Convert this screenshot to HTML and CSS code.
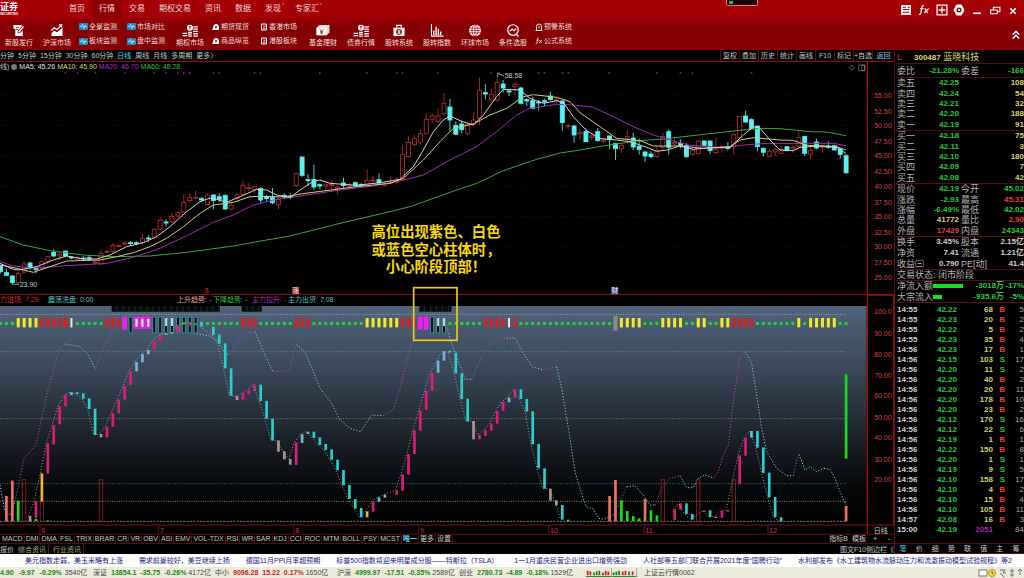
FILE: index.html
```html
<!DOCTYPE html>
<html lang="zh-CN">
<head>
<meta charset="utf-8">
<title>证券行情</title>
<link rel="stylesheet" href="styles.css">
</head>
<body>
<svg class="defs" aria-hidden="true">
  <symbol id="i-new" viewBox="0 0 14 14"><path d="M1 1h9v2l-4 4v3l3-1 2-2v6H3V5H1z" fill="#fff"/><path d="M6 8l5-6 2 1-5 6-2 1z" fill="#fff" stroke="#8a0003" stroke-width=".7"/><path d="M4 4h3M4 6h2" stroke="#8a0003"/></symbol>
  <symbol id="i-trend" viewBox="0 0 14 14"><path d="M1 13v-3l3-3 3 2 6-5v9z" fill="#fff"/><path d="M1 7l3-3 3 2 5-5M9 1h3v3" fill="none" stroke="#fff" stroke-width="1.3"/></symbol>
  <symbol id="i-coins" viewBox="0 0 18 14"><circle cx="9" cy="4" r="3.2" fill="#fff"/><path d="M9 2v4M7.7 3h2.6" stroke="#8a0003" stroke-width=".8"/><path d="M1 10h5M1 12.500h5M7 9h4M7 11h4M7 13h4M12.500 3h5M12.500 5.500h5M12.500 8h5M12.500 10.500h5M12.500 13h5" stroke="#fff" stroke-width="1.400"/></symbol>
  <symbol id="i-fund" viewBox="0 0 16 14"><path d="M1 4l3-3h11v8l-3 3H1z" fill="#e9d5d5"/><path d="M1 4h11v8H1z" fill="#fff"/><path d="M4.500 5.500l2 2.500 2-2.500M6.500 8v3M5 8.300h3M5 9.600h3" stroke="#8a0003" stroke-width=".8" fill="none"/></symbol>
  <symbol id="i-bag" viewBox="0 0 14 14"><path d="M1 4h12v9H1z" fill="#fff"/><path d="M4.500 4V1.500h5V4" fill="none" stroke="#fff" stroke-width="1.300"/><circle cx="7" cy="8.500" r="3" fill="#8a0003"/><path d="M8.500 7.200H6.200v1.300h1.700v1.400H5.500M7 6.200v4.600" stroke="#fff" stroke-width=".8" fill="none"/></symbol>
  <symbol id="i-bars" viewBox="0 0 14 14"><path d="M1 0v13h13" fill="none" stroke="#fff" stroke-width="1.200"/><path d="M3.500 12V7M6 12V3M8.500 12V5M11 12V8" stroke="#fff" stroke-width="1.500"/></symbol>
  <symbol id="i-globe" viewBox="0 0 14 14"><circle cx="7" cy="7" r="6.500" fill="#fff"/><path d="M0 4.500h14M0 9.500h14M7 0v14M1 7h12" stroke="#8a0003" stroke-width=".7"/><ellipse cx="7" cy="7" rx="3.200" ry="6.500" fill="none" stroke="#8a0003" stroke-width=".7"/></symbol>
  <symbol id="i-pick" viewBox="0 0 14 14"><circle cx="7" cy="6.500" r="5.700" fill="none" stroke="#fff" stroke-width="1.300"/><path d="M3.500 8l2.500-2.500 2 1.700L10.500 5M10.500 11l2.500 2.500" fill="none" stroke="#fff" stroke-width="1.300"/></symbol>
  <symbol id="i-wave" viewBox="0 0 9 7"><rect width="9" height="7" rx="1" fill="#2787bf"/><path d="M1 3.500h1.500l1-2 1.300 4 1.300-3 .8 1.500H8" fill="none" stroke="#d8f2ff" stroke-width=".8"/></symbol>
  <symbol id="i-lamp" viewBox="0 0 8 8"><path d="M1 5c0-5 5.500-5 6-1v3H0z" fill="#fff"/><circle cx="4" cy="4" r="1" fill="#8a0003"/></symbol>
  <symbol id="i-box" viewBox="0 0 8 8"><path d="M1.500 1h5v6h-5z" fill="none" stroke="#fff"/><path d="M3 3h2.500L3 5.500h2.500" fill="none" stroke="#fff" stroke-width=".7"/></symbol>
  <symbol id="i-bell" viewBox="0 0 8 8"><path d="M1.500 7V3.500a2.500 2.500 0 0 1 5 0V7M.5 7.500h7M4 3v2.500" fill="none" stroke="#fff" stroke-width=".9"/></symbol>
  <symbol id="i-fx" viewBox="0 0 12 10"><path d="M6 .8C4.500.3 4 1 3.700 3L3 7.500C2.700 9.300 2 9.500 1 9.200M2 3.700h3.500M6.500 4c2-.8 1.500 4 3.500 3.500M10.800 3.800C9 3.500 8 7.500 6 7.500" fill="none" stroke="#fff" stroke-width="1.200"/></symbol>
</svg>

<header class="topbar">
  <div class="brand"><strong>证券</strong><small>SECURITIES</small></div>
  <nav class="menu">
    <a href="#">首页</a><a href="#" class="is-active">行情</a><a href="#">交易</a><a href="#">期权交易</a><a href="#">资讯</a><a href="#">数据</a><a href="#" class="has-new">发现</a><a href="#" class="has-new">专家汇</a>
  </nav>
  <div class="meter"><i></i></div>
  <div class="window-tools">
    <button aria-label="资讯"><svg viewBox="0 0 11 11"><path d="M1 1h9v9H1z" fill="#fff"/><path d="M2.500 3h3M2.500 5h6M2.500 7.500h6M7 3h2" stroke="#a50006"/></svg></button>
    <button aria-label="公式"><svg viewBox="0 0 12 10"><use href="#i-fx"/></svg></button>
    <button aria-label="布局"><svg viewBox="0 0 11 11"><path d="M1 1h9v9H1zM5.500 2.500v6M2.500 5.500h6" fill="none" stroke="#fff" stroke-width="1.200"/></svg></button>
    <button aria-label="设置"><svg viewBox="0 0 11 11"><path d="M3.500 1h4l2.500 4.500L7.500 10h-4L1 5.500z" fill="#fff" stroke="#fff" stroke-linejoin="round"/><circle cx="5.500" cy="5.500" r="2.300" fill="#a50006"/><circle cx="5.500" cy="5.500" r="1" fill="#fff"/></svg></button>
    <button aria-label="最小化"><svg viewBox="0 0 11 11"><path d="M2 8.500h7" stroke="#fff" stroke-width="1.500"/></svg></button>
    <button aria-label="还原"><svg viewBox="0 0 11 11"><path d="M4 5V3h6v4H8M1.500 5.500H7.500v3.500h-6z" fill="none" stroke="#fff"/></svg></button>
    <button aria-label="关闭"><svg viewBox="0 0 11 11"><path d="M3 4l5 5M8 4l-5 5" stroke="#fff" stroke-width="1.400"/></svg></button>
  </div>
</header>

<div class="toolbar">
  <button class="tool"><svg><use href="#i-new"/></svg>新股发行</button>
  <button class="tool"><svg><use href="#i-trend"/></svg>沪深市场</button>
  <div class="minis">
    <button><svg class="blue"><use href="#i-wave"/></svg>全景监测</button><button><svg class="blue"><use href="#i-wave"/></svg>市场对比</button>
    <button><svg class="blue"><use href="#i-wave"/></svg>板块监测</button><button><svg class="blue"><use href="#i-wave"/></svg>盘中监测</button>
  </div>
  <button class="tool"><svg><use href="#i-coins"/></svg>期权市场</button>
  <div class="minis">
    <button><svg><use href="#i-lamp"/></svg>期货现货</button><button><svg><use href="#i-box"/></svg>香港市场</button>
    <button><svg><use href="#i-lamp"/></svg>商品纵览</button><button><svg><use href="#i-box"/></svg>港股板块</button>
  </div>
  <button class="tool"><svg><use href="#i-fund"/></svg>基金理财</button>
  <button class="tool"><svg><use href="#i-coins"/></svg>债券行情</button>
  <button class="tool"><svg><use href="#i-bag"/></svg>股转系统</button>
  <button class="tool"><svg><use href="#i-bars"/></svg>股转指数</button>
  <button class="tool"><svg><use href="#i-globe"/></svg>环球市场</button>
  <button class="tool"><svg><use href="#i-pick"/></svg>条件选股</button>
  <div class="minis single">
    <button><svg><use href="#i-bell"/></svg>预警系统</button>
    <button><svg><use href="#i-fx"/></svg>公式系统</button>
  </div>
  <button class="collapse" aria-label="收起"><svg viewBox="0 0 10 12"><path d="M1 6l4-4 4 4M1 11l4-4 4 4" fill="none" stroke="#fff" stroke-width="2"/></svg></button>
</div>

<div class="workspace">
  <main class="charts">
    <div class="period-bar">
      <div class="periods"><button>分钟</button><button>5分钟</button><button>15分钟</button><button>30分钟</button><button>60分钟</button><button class="is-active">日线</button><button>周线</button><button>月线</button><button>多周期</button><button>更多〉</button></div>
      <div class="actions"><button>复权</button><button>叠加</button><button>历史</button><button>统计</button><button>画线</button><button>F10</button><button>标记</button><button>+自选</button><button class="back">返回</button></div>
    </div>
    <div class="legend price-legend"><span>线)</span><i class="knob"></i><span class="ma5">MA5: 45.26</span><span class="ma10">MA10: 45.90</span><span class="ma20">MA20: 46.70</span><span class="ma60">MA60: 48.28</span></div>
    <svg id="price" class="plot" viewBox="0 36 2682 669" role="img" aria-label="日线K线图"></svg>
    <div class="legend flow-legend"><span class="red w48">力进场: 7.29</span><span class="cyan w129">震荡洗盘: 0.00</span><span class="rose w35">上升趋势: -</span><span class="green w40">下降趋势: -</span><span class="violet w35">主力拉升: -</span><span class="cyan">主力出货: 7.08</span></div>
    <svg id="flow" class="plot" viewBox="0 63 2682 687" role="img" aria-label="主力指标图"></svg>
    <div class="tab-row">
      <div class="indicators"><button>MACD</button><button>DMI</button><button>DMA</button><button>FSL</button><button>TRIX</button><button>BRAR</button><button>CR</button><button>VR</button><button>OBV</button><button>ASI</button><button>EMV</button><button>VOL-TDX</button><button>RSI</button><button>WR</button><button>SAR</button><button>KDJ</button><button>CCI</button><button>ROC</button><button>MTM</button><button>BOLL</button><button>PSY</button><button>MCST</button><button class="is-active">唯一</button><button>更多</button><button>设置</button></div>
      <div class="indicator-tools"><button>指标B</button><button>模板</button><button>+</button><button>-</button></div>
    </div>
    <div class="news-row">
      <div class="news-tabs"><button>报价</button><button class="gold">综合资讯</button><button class="gold">行业资讯</button></div>
      <div class="side-tabs"><button>图文F10</button><button>侧边栏《</button></div>
    </div>
  </main>

  <aside class="quote">
    <h1><span>L</span><b>300487</b> 蓝晓科技</h1>
    <table class="book one"><tr><th>委比</th><td class="g">-21.28%</td><th>委差</th><td class="g">-166</td></tr></table>
    <table class="book five" id="asks"></table>
    <table class="book five" id="bids"></table>
    <table class="book five">
      <tr><th>现价</th><td class="g">42.19</td><th>今开</th><td class="g">45.02</td></tr>
      <tr><th>涨跌</th><td class="g">-2.93</td><th>最高</th><td class="r">45.31</td></tr>
      <tr><th>涨幅</th><td class="g">-6.49%</td><th>最低</th><td class="g">42.02</td></tr>
      <tr><th>总量</th><td class="y">41772</td><th>量比</th><td class="r">2.90</td></tr>
      <tr><th>外盘</th><td class="r">17429</td><th>内盘</th><td class="g">24343</td></tr>
    </table>
    <table class="book three">
      <tr><th>换手</th><td>3.45%</td><th>股本</th><td>2.15亿</td></tr>
      <tr><th>净资</th><td>7.41</td><th>流通</th><td>1.21亿</td></tr>
      <tr><th>收益㈢</th><td>0.790</td><th>PE[动]</th><td>41.4</td></tr>
    </table>
    <p class="state">交易状态: 闭市阶段</p>
    <table class="inflow">
      <tr><th>净流入额</th><td class="bar"><i style="width:30px"></i></td><td>-3018万</td><td>-17%</td></tr>
      <tr><th>大宗流入</th><td class="bar"><i style="width:9px"></i></td><td>-935.6万</td><td>-5%</td></tr>
    </table>
    <table class="trades" id="trades"></table>
    <div class="quote-tabs"><button class="is-active">笔</button><button>价</button><button>细</button><button>势</button><button>联</button><button>值</button><button>主</button><button>筹</button></div>
  </aside>
</div>

<footer>
  <div class="ticker"><a href="#">美元指数走弱，美玉米略有上涨</a><a href="#">需求前景较好，美豆继续上扬</a><a href="#">德国11月PPI月率超预期</a><a href="#">标普500指数将迎来明星成分股——特斯拉（TSLA）</a><a href="#">1一1月重庆民营企业进出口增势强劲</a><a href="#">人社部等五部门联合开展2021年度“国聘行动”</a><a href="#">水利部发布《水工建筑物水流脉动压力和流激振动模型试验规程》等2</a></div>
  <div class="status">
    <div class="index dn first"><b>4.90</b><b>-9.97</b><b>-0.29%</b><span>3540亿</span></div>
    <div class="index dn"><span>深证</span><b>13854.1</b><b>-35.75</b><b>-0.26%</b><span>4172亿</span></div>
    <div class="index up"><span>中小</span><b>9096.28</b><b>15.22</b><b>0.17%</b><span>1650亿</span></div>
    <div class="index dn"><span>沪深</span><b>4999.97</b><b>-17.51</b><b>-0.35%</b><span>2589亿</span></div>
    <div class="index dn"><span>创业</span><b>2780.73</b><b>-4.89</b><b>-0.18%</b><span>1529亿</span></div>
    <svg class="spark" viewBox="0 0 57 10"><path d="M0 9.500h57" stroke="#176b17"/><path d="M2 3v5M5 4v4M19 5v3M22 3v5M25 4v4M41 4v4M44 3v5M52 4v4" stroke="#c22" stroke-width="2"/><path d="M9 5v3M12 4v4M15 3v5M31 5v3M34 4v4M37 3v5M48 4v4" stroke="#181" stroke-width="2"/><path d="M28.500 0v10M56.500 0v10" stroke="#999"/></svg>
    <span class="server">上证云行情0062</span>
    <svg class="tray" viewBox="0 0 46 10"><rect x="1" y="2" width="8" height="6" fill="#fff" stroke="#777"/><circle cx="14" cy="5" r="3.500" fill="#f2e43a" stroke="#a59a1b"/><path d="M14 3v2.500h1.500" fill="none" stroke="#555"/><path d="M22 2h5l-2 3h3M22 5l4 4" fill="none" stroke="#666"/><path d="M34 1v8M32 3h4M32 7h4M42 1v6M40 3l2-2 2 2" fill="none" stroke="#777"/></svg>
  </div>
</footer>
<script src="app.js"></script>
</body>
</html>
```
FILE: styles.css
```css
* { box-sizing: border-box; }
body {
  margin: 0;
  min-height: 100vh;
  background: #000;
  color: #c8c8c8;
  font: 7px/10px "Liberation Sans", "Noto Sans CJK SC", sans-serif;
  overflow-x: hidden;
}
button { margin: 0; padding: 0; border: 0; background: none; color: inherit; font: inherit; white-space: nowrap; cursor: pointer; }
a { color: inherit; text-decoration: none; white-space: nowrap; }
.defs { display: none; }

/* header */
.topbar { display: flex; height: 18px; background: #a50006; color: #f0d8d8; }
.brand { width: 62px; color: #fff; line-height: 10px; padding-top: 2px; }
.brand strong { display: block; font-size: 9px; line-height: 10px; }
.brand small { display: block; font-size: 3px; line-height: 4px; font-weight: bold; }
.menu { display: flex; font-size: 8px; line-height: 17px; }
.menu a { padding: 0 7px; position: relative; }
.menu .is-active { background: #8f0004; }
.has-new::after { content: ""; position: absolute; right: 4px; top: 3px; border: 1px solid #ff2020; }
.meter { margin-left: auto; width: 32px; height: 6px; border: 1px solid #b98a68; border-top: 0; border-radius: 0 0 2px 2px; background: #240002; padding: 1px 2px; }
.meter i { display: block; width: 4px; height: 3px; background: #3fae5a; }
.window-tools { display: flex; justify-content: space-between; width: 124px; margin-left: 142px; padding: 2px 5px 0 0; }
.window-tools svg { display: block; width: 12px; height: 12px; }

/* toolbar */
.toolbar { display: flex; height: 32px; background: linear-gradient(#970005, #850003 30%); color: #f4dede; }
.tool { flex: none; width: 38px; padding-top: 5px; line-height: 12px; }
.tool svg { display: block; width: 18px; height: 13px; margin: 0 auto; }
.minis { display: grid; grid-template-columns: 48px auto; align-content: space-evenly; margin: 0 4px 0 3px; width: 88px; }
.minis button { display: flex; align-items: center; gap: 1px; line-height: 12px; }
.minis svg { width: 8px; height: 8px; }
.minis svg.blue { width: 9px; height: 7px; }
.minis.single { grid-template-columns: auto; width: 48px; }
.collapse { margin-left: auto; padding-right: 4px; }
.collapse svg { display: block; width: 8px; height: 11px; }

/* workspace */
.workspace { display: flex; }
.charts { flex: 1 1 0; min-width: 0; }
.quote { flex: none; width: 130px; border-left: 1px solid #5c0c0c; border-bottom: 1px solid #5c0c0c; display: flex; flex-direction: column; }
.period-bar { display: flex; justify-content: space-between; height: 12px; line-height: 11px; border-bottom: 1px solid #8c1010; }
.periods { display: flex; gap: 4px; }
.periods .is-active { color: #4fd7e8; }
.actions { display: flex; }
.actions button { width: 19px; border-left: 1px solid #5c0c0c; }
.actions .back { width: 22px; color: #8fc6dc; }
.legend { display: flex; white-space: nowrap; }
.price-legend { height: 10px; gap: 2px; }
.knob { width: 6px; height: 6px; border-radius: 3px; background: #777; margin-top: 2px; }
.ma5 { color: #e0e0e0; }
.ma10 { color: #dcdc7c; }
.ma20, .violet { color: #b030c0; }
.ma60, .green { color: #30c040; }
.flow-legend { height: 11px; line-height: 10px; }
.red { color: #d03030; }
.cyan { color: #50c8c8; }
.rose { color: #d8a8a0; }
.w48 { width: 48px; }
.w129 { width: 129px; }
.w35 { width: 36px; }
.w40 { width: 39px; }
.plot { display: block; width: 100%; height: auto; overflow: visible; position: relative; }
.plot text { font-family: "Liberation Sans", "Noto Sans CJK SC", sans-serif; font-size: 21px; }
.plot .axis-label { fill: #d84444; text-anchor: end; }
.plot .month { fill: #c83a3a; }
.plot .mark { fill: #c8c8c8; }
.plot .badge { text-anchor: middle; fill: #fff; }
.plot .badge.hot { fill: #d22; }
.plot .note { font-size: 43px; font-weight: bold; fill: #f5d90a; text-anchor: middle; }
.plot .unit { fill: #c8c8c8; text-anchor: middle; }

.tab-row, .news-row { display: flex; justify-content: space-between; border-bottom: 1px solid #5c0c0c; }
.tab-row { height: 9px; line-height: 8px; }
.news-row { height: 10px; line-height: 9px; border: 0; }
.indicators { display: flex; padding-left: 1px; }
.indicators button { padding: 0 1px; border-right: 1px solid #5c0c0c; }
.indicators .is-active { color: #4fd7e8; font-weight: bold; }
.indicator-tools { display: flex; gap: 4px; }
.indicator-tools button:nth-child(n+3) { width: 10px; font-size: 8px; }
.news-tabs { display: flex; gap: 4px; }
.gold { color: #b0a860; border-right: 1px solid #5c0c0c; padding-right: 2px; }
.side-tabs { display: flex; }

/* quote panel */
.quote h1 { margin: 0; height: 14px; border-bottom: 1px solid #5c0c0c; color: #dcd878; font-size: 9px; font-weight: normal; line-height: 15px; white-space: nowrap; }
.quote h1 span { display: inline-block; width: 19px; padding-left: 2px; color: #d03030; }
.quote h1 b { font-size: 8px; }
table { border-collapse: collapse; width: 100%; table-layout: fixed; }
th { padding: 0; font-size: 9px; font-weight: normal; text-align: left; line-height: 10px; white-space: nowrap; color: #b4b4b4; }
td { padding: 0; font-size: 8px; font-weight: bold; text-align: right; line-height: 10px; white-space: nowrap; color: #d0d0d0; }
.book, .inflow { border-bottom: 1px solid #5c0c0c; }
.book th { width: 30px; padding-left: 2px; }
.book td:nth-child(2) { width: 34px; }
.book.one { height: 14px; }
.book.five { height: 53px; }
.book.three { height: 33px; }
.g { color: #28c844; }
.r { color: #ec3c3c; }
.y { color: #d8d070; }
.v { color: #a030b0; }
.state { margin: 0; height: 11px; padding-left: 2px; font-size: 9px; line-height: 10px; border-bottom: 1px solid #5c0c0c; color: #b4b4b4; }
.inflow { height: 22px; }
.inflow th { width: 38px; padding-left: 2px; }
.inflow td { color: #28c844; }
.inflow .bar { width: 31px; text-align: left; }
.inflow .bar i { display: block; height: 4px; background: #10e020; }
.inflow td:last-child { width: 20px; }
.trades { margin-top: 2px; }
.trades td { height: 10px; }
.trades td:first-child { width: 28px; padding-left: 2px; text-align: left; }
.trades td:nth-child(2) { width: 34px; }
.trades td:nth-child(3) { width: 36px; }
.trades td:nth-child(4) { width: 12px; }
.trades td:nth-child(5) { font-weight: normal; color: #a8a8a8; }
.quote-tabs { display: flex; justify-content: space-around; margin-top: auto; border-top: 1px solid #5c0c0c; line-height: 9px; }
.quote-tabs .is-active { color: #4fd7e8; }

/* footer */
.ticker { display: flex; justify-content: space-between; height: 13px; padding: 0 12px 0 25px; line-height: 13px; background: #fdfdfd; color: #1c1c80; }
.status { display: flex; align-items: center; height: 11px; background: #eceadb; color: #444; white-space: nowrap; }
.index { display: flex; gap: 4px; width: 122px; }
.index.first { width: 93px; gap: 5px; }
.dn b { color: #128a12; }
.up b { color: #d01818; }
.index b:last-of-type { margin-right: -2px; }
.spark { width: 57px; height: 9px; margin-left: 2px; }
.server { margin-left: 4px; }
.tray { width: 46px; height: 10px; margin-left: auto; }
```
FILE: app.js
```javascript
const NS = 'http://www.w3.org/2000/svg';
const xOf = i => 1.5 + 17.74 * i;

function add(parent, tag, attrs, text) {
  const el = document.createElementNS(NS, tag);
  for (const k in attrs) el.setAttribute(k, attrs[k]);
  if (text !== undefined) el.textContent = text;
  parent.appendChild(el);
  return el;
}
function hline(svg, y, x2, color, dash, width) {
  add(svg, 'path', { d: `M0 ${y}H${x2}`, stroke: color, 'stroke-width': width || 3, 'stroke-dasharray': dash || 'none', fill: 'none' });
}

/* ---- price chart: direction, high, body top, body bottom, low ---- */
const candles = `d618 618 635 640,d625 638 646 648,d645 648 668 675,u635 640 668 670,u603 612 636 640,d606 609 623 630,d620 625 629 640,u603 605 625 628,u587 590 605 612,d568 577 588 592,
u576 583 588 600,d572 573 588 591,d588 591 594 598,u588 592 598 602,d588 594 597 602,d585 593 597 602,u602 606 609 612,u570 580 612 614,u570 574 577 580,u548 556 575 578,
u552 556 559 562,u544 549 552 558,d543 548 551 558,d544 548 551 556,u523 536 548 555,d526 534 537 546,u505 508 531 535,u472 481 508 512,d478 486 489 500,u458 469 485 490,
u455 458 468 474,u402 428 456 460,u400 412 422 428,u392 412 415 418,d412 415 420 424,u400 405 434 436,d404 405 422 448,d400 410 418 426,d404 406 447 450,u425 436 447 450,
u400 404 416 420,u362 376 404 408,u368 382 386 395,u378 380 388 400,d382 385 420 430,d405 411 416 424,d384 413 428 432,u412 418 433 448,d400 406 410 418,d400 408 412 418,
u338 340 376 380,d290 291 346 352,d343 359 362 378,d314 358 381 390,d370 374 378 388,u366 374 378 392,u360 373 377 396,u378 382 386 403,d352 369 377 384,u368 375 379 388,
d364 368 378 380,d369 374 377 382,u328 361 380 382,u346 360 363 368,d340 359 369 372,u366 371 376 380,u348 366 369 374,u350 362 366 370,u255 284 357 360,u228 247 290 292,
u224 236 253 258,u208 221 247 252,u160 178 220 224,u160 168 178 188,u145 168 184 190,u100 130 160 168,d117 141 180 212,d184 196 223 226,d182 192 209 220,u188 193 220 226,
u157 180 192 200,u52 92 175 196,d72 98 102 118,u88 103 120 124,u50 67 120 126,d60 72 84 98,d88 93 96 108,u66 73 80 106,d80 84 130 134,d114 119 123 138,
d110 122 145 148,d120 126 129 152,d116 122 126 140,d95 108 119 122,u110 118 122 130,d120 123 188 212,u190 197 200 208,d195 198 225 248,u206 218 222 238,d205 215 245 247,
u218 228 232 240,d204 215 242 245,u232 240 244 250,d226 228 239 268,d248 250 266 300,u253 257 266 280,u210 230 235 250,d218 234 261 270,d236 259 268 284,d272 276 288 306,
d274 282 290 296,u258 272 290 293,u218 230 262 270,d208 215 262 284,u230 248 252 258,d238 250 257 265,d250 257 290 294,u262 272 283 286,u240 243 280 284,d242 243 256 258,
d242 243 272 282,u232 268 278 282,u255 260 264 278,d246 260 265 272,u220 224 258 284,u168 169 232 236,d152 168 186 190,d175 179 206 208,d197 198 260 274,d262 265 277 290,
u266 275 289 292,u264 269 276 288,u258 267 280 282,d258 260 272 274,u256 262 266 278,u215 233 258 262,d228 229 280 288,u262 272 282 298,d236 246 264 268,u250 258 262 280,
d244 258 262 266,d254 257 270 272,d264 267 283 296,d282 287 338 342`.split(',').map(s => s.trim());

const averages = {
  '#38a838': '0,530 70,555 150,572 250,585 340,590 450,588 560,577 700,558 800,540 870,528 1020,490 1170,455 1230,440 1370,390 1430,370 1510,332 1610,298 1680,279 1740,270 1820,256 1920,242 1990,237 2120,222 2210,212 2280,205 2340,206 2430,215 2480,216 2538,227',
  '#a02cb0': '0,605 40,618 100,624 200,617 320,610 400,592 480,565 560,527 640,487 700,465 760,435 820,420 900,408 1020,390 1120,378 1200,363 1270,345 1350,300 1430,260 1490,215 1550,165 1590,145 1670,133 1720,135 1780,142 1840,170 1900,200 1960,225 2010,240 2070,256 2170,263 2240,254 2310,250 2500,250 2538,257',
  '#d0cc78': '0,615 50,625 100,637 150,620 200,603 300,600 350,590 400,578 450,560 500,535 550,500 600,460 640,435 700,427 750,410 780,409 860,411 900,402 970,393 1070,380 1170,370 1210,355 1270,300 1320,245 1360,205 1420,192 1470,165 1520,145 1570,110 1600,104 1670,112 1710,125 1740,158 1800,200 1850,235 1920,242 1960,258 2040,258 2110,265 2190,260 2220,240 2260,233 2340,240 2380,241 2420,256 2510,260 2538,270',
  '#d8d0d0': '0,610 40,628 55,630 110,620 160,600 200,588 250,597 290,597 330,585 380,560 430,548 470,530 510,500 560,455 600,425 630,414 650,418 680,427 720,410 770,388 800,390 830,405 870,412 900,390 940,364 960,360 990,370 1070,376 1140,368 1200,358 1240,320 1270,270 1300,215 1330,180 1350,168 1380,182 1420,195 1450,165 1490,110 1510,88 1560,90 1590,115 1630,130 1670,122 1690,128 1720,170 1760,212 1800,236 1850,240 1890,245 1940,262 1970,274 2000,270 2040,258 2080,268 2120,264 2190,262 2230,225 2260,200 2280,205 2310,240 2340,270 2380,272 2400,262 2460,258 2510,262 2538,280'
};

function drawPrice() {
  const svg = document.getElementById('price');
  [103, 196, 287, 379, 469, 559, 651].forEach(y => hline(svg, y, 2620, '#4a0c10', '3 4', 2));
  [105, 153, 196, 244, 287, 335, 379, 427, 469, 517, 559, 607, 651].forEach((y, k) =>
    add(svg, 'text', { class: 'axis-label', x: 2675, y: y + 8 }, (55 - 2.5 * k).toFixed(2)));
  [196, 232, 286, 374, 461, 498, 533, 551, 569, 640, 657, 763, 781, 959, 1100, 1190, 1207, 1313, 1473, 1497, 1615, 1633, 1687, 1705, 1827, 1970, 2041, 2077, 2254]
    .forEach(x => add(svg, 'rect', { x: x - 2, y: 37, width: 5, height: 4, fill: '#8f309c' }));
  candles.forEach((row, i) => {
    const up = row[0] === 'u';
    const [h, t, b, l] = row.slice(1).split(' ').map(Number);
    const x = xOf(i), c = up ? '#b83030' : '#54f4f4';
    add(svg, 'path', { d: `M${x} ${h}V${t}M${x} ${b}V${l}`, stroke: c, 'stroke-width': 2.5 });
    add(svg, 'rect', { x: x - 6, y: t, width: 12, height: b - t, fill: up ? '#000' : c, stroke: c, 'stroke-width': 2.5 });
  });
  for (const color in averages)
    add(svg, 'polyline', { points: averages[color], fill: 'none', stroke: color, 'stroke-width': 3, 'stroke-linejoin': 'round' });
  add(svg, 'path', { d: 'M40 673H58M1493 40L1512 48M1493 40V50', stroke: '#bbb', 'stroke-width': 2.5 });
  add(svg, 'text', { class: 'mark', x: 59, y: 681 }, '23.90');
  add(svg, 'text', { class: 'mark', x: 1514, y: 55 }, '58.58');
  add(svg, 'text', { class: 'badge hot', x: 620, y: 700 }, '$');
  add(svg, 'rect', { x: 876, y: 681, width: 21, height: 22, fill: '#a01820' });
  add(svg, 'text', { class: 'badge', x: 887, y: 700 }, '涨');
  add(svg, 'rect', { x: 1834, y: 681, width: 21, height: 22, fill: '#285080' });
  add(svg, 'text', { class: 'badge', x: 1844, y: 700 }, '财');
  add(svg, 'path', { d: 'M2555 15l8 8-8 8-8-8zM2576 15h18v17h-18zM2586 15v17h8v-17z', fill: 'none', stroke: '#888', 'stroke-width': 2 });
  add(svg, 'path', { d: 'M2602 6V703', stroke: '#9c1014', 'stroke-width': 4 });
  hline(svg, 703, 2682, '#9c1014');
  ['高位出现紫色、白色', '或蓝色空心柱体时，', '小心阶段顶部！'].forEach((s, k) =>
    add(svg, 'text', { class: 'note', x: 1308, y: 532 + 52 * k }, s));
}

/* ---- indicator chart ---- */
const tint = { p: '#e01a7c', c: '#28d0d0', b: '#78b4e4', g: '#b09494', s: '#f07068', n: '#12e012', o: '#f0b040' };
const bars = `1s633-709,2s587-709,3n647-709,5g693-709,6p649-698,6n701-708,7o565-650,8p475-566,8n706-709,9p421-478,10p364-418,11p331-364,12b322-330,13c322-327,14c325-341,15c340-372,16c371-450,17g447-457,18p425-457,19p384-426,
20p343-385,21p303-344,22p258-300,23b231-259,24b207-232,25b195-208,26p168-194,27p150-169,28b146-150,29b142-146,30p122-142,31n112-118,32p112-122,33n115-119,34c112-124,35n116-120,36c125-150,37c148-176,38c175-250,39c250-332,
40g333-345,41p325-344,42p316-328,43p299-318,44c299-348,45c348-401,46c401-466,47g466-500,48g499-523,49g522-539,50p472-540,51b448-474,52b440-447,53c440-459,54c457-480,55c477-495,56c493-524,57c524-556,58c555-601,59c600-642,
60c642-671,61c669-697,62o679-697,63p650-680,64b637-650,65b629-638,67p616-629,68p568-617,69p507-569,70p436-507,71p376-437,72p317-375,73p262-317,74b227-263,75b199-227,76c197-203,77c203-265,78c265-342,79c341-409,
80g408-463,81p450-463,82p435-453,83p416-437,84p378-416,85p351-378,86b338-352,87p314-338,88c313-342,89c342-380,90c379-478,91c477-550,92c550-611,93g611-647,94g646-661,95c660-704,96n704-709,
103s633-709,104s585-709,105n646-709,106n678-709,107n693-709,108n700-709,109s642-709,110n676-709,111n691-709,114p672-705,115p655-674,116c655-688,117c687-704,119p676-681,120c676-696,121g695-699,122p678-698,123p675-680,
125p511-597,126p458-512,127b438-458,128c438-488,129c487-564,130c563-637,131c636-697,132c697-709,143s663-709,143n268-521`.split(',').map(s => s.trim());

/* signal per day: . dot, Y/R/W/M/G bars, H hollow, I hollow with white, X magenta with white */
const signals = '...YYYYRRRRRW.....RRRMHXXXHHIIHHHH.......RRR......RRR.........YYYYYYRRRMMHII......RRRRWR................GYYYY...YYYY..YY..YYRRRR.......Y.YYYYY..';

const flows = [
  ['c', '0,600 15,680 30,690 45,650'], ['v', '45,650 72,520 108,480 140,330 180,185 196,177'], ['c', '196,177 240,185 265,210 286,252'],
  ['v', '286,252 310,190 340,130 370,105'], ['c', '590,146 625,152 650,165 675,205 690,210'], ['v', '690,210 720,160 745,143 765,140'],
  ['c', '765,140 790,200 820,262'], ['v', '820,260 870,257 880,205 890,178'], ['c', '890,178 915,200 960,310 995,355 1020,405 1050,430 1082,440 1115,390 1150,392'],
  ['v', '1150,392 1180,375 1200,310 1215,250 1240,160 1260,110'], ['c', '1335,110 1350,160 1367,210 1384,250 1395,283 1415,283'],
  ['v', '1415,283 1438,230 1470,180 1490,157 1520,160'], ['c', '1520,160 1545,158 1570,205 1597,245 1630,255'], ['v', '1630,255 1670,245'],
  ['c', '1670,245 1685,310 1710,460 1725,560 1740,610 1758,665 1780,672 1795,700 1810,703 1840,690'], ['v', '1840,690 1860,650 1880,605'],
  ['c', '1880,605 1905,602 1930,630 1950,660 1965,660'], ['v', '1965,660 1985,610 2010,580 2040,572'], ['c', '2040,572 2060,608 2080,608 2094,580 2115,570 2140,580'],
  ['v', '2140,580 2155,560 2168,515 2185,480 2195,390 2210,280 2220,210 2236,200'], ['c', '2236,200 2255,235 2270,330 2285,430 2300,500 2330,550 2360,572 2380,572'],
  ['v', '2380,572 2390,525 2397,508'], ['c', '2397,508 2415,555 2430,545 2450,560 2470,550 2490,553 2505,580 2520,620 2538,660']
];

function drawSignal(svg, code, i) {
  const x = xOf(i);
  const bar = (w, y, h, fill, extra) => add(svg, 'rect', Object.assign({ x: x - w / 2, y, width: w, height: h, fill }, extra));
  if (code === '.') bar(9, 111, 9, '#20d830');
  if (code === 'Y') bar(9, 99, 28, '#f4ec20');
  if (code === 'R') bar(9, 99, 28, '#e01c1c');
  if (code === 'W') bar(6, 99, 28, '#f4e4e4');
  if (code === 'G') bar(12, 93, 44, '#8c8c90');
  if (code === 'M') bar(14, 94, 40, '#f020f0');
  if (code === 'X') { bar(18, 94, 38, '#d824d8'); bar(6, 101, 24, '#fff'); }
  if (code === 'H' || code === 'I') bar(9, 96, 48, '#061018', { stroke: '#3a9c9c', 'stroke-width': 2.5 });
  if (code === 'I') bar(5, 99, 24, '#f4f4f4');
}

function drawFlow() {
  const svg = document.getElementById('flow');
  const grad = add(add(svg, 'defs', {}), 'linearGradient', { id: 'sky', x1: 0, y1: 0, x2: 0, y2: 1 });
  [[0, '#50647c'], [.35, '#354150'], [.6, '#1b2129'], [.82, '#08090b'], [1, '#000']].forEach(([o, c]) => add(grad, 'stop', { offset: o, 'stop-color': c }));
  add(svg, 'rect', { x: 0, y: 63, width: 2600, height: 657, fill: 'url(#sky)' });
  hline(svg, 88, 2540, '#b898a0', '3 4');
  hline(svg, 199, 2540, '#4a9096', '3 4');
  hline(svg, 401, 2540, '#777084', '3 4');
  hline(svg, 596, 2540, '#2f7074', '3 4');
  hline(svg, 649, 2540, '#888838', '3 4');
  hline(svg, 709, 2540, '#6c8484', '6 4');
  [[335, 660], [725, 785], [1258, 1354]].forEach(([a, b]) => {
    add(svg, 'rect', { x: a, y: 63, width: b - a, height: 17, fill: '#050a0c' });
    for (let x = a + 16; x < b; x += 18) add(svg, 'path', { d: `M${x} 63V80`, stroke: '#1e4a3c', 'stroke-width': 2 });
  });
  flows.forEach(([k, points]) => add(svg, 'polyline', { points, fill: 'none', stroke: k === 'c' ? '#74c4c8' : '#a044b0', 'stroke-width': 3, 'stroke-dasharray': '4 5' }));
  signals.split('').forEach((code, i) => drawSignal(svg, code, i));
  [4, 17, 112, 118, 124].forEach(i => add(svg, 'rect', { x: xOf(i) - 5, y: 584, width: 10, height: 125, fill: 'none', stroke: '#8c2222', 'stroke-width': 2.5 }));
  add(svg, 'rect', { x: xOf(7) - 5, y: 650, width: 10, height: 59, fill: 'none', stroke: '#8c2222', 'stroke-width': 2.5 });
  const trail = [];
  bars.forEach(row => {
    const [, i, k, t, b] = row.match(/(\d+)([a-z])(\d+)-(\d+)/);
    const x = xOf(+i);
    add(svg, 'rect', { x: x - 4, y: t, width: 8, height: b - t, fill: tint[k] });
    if ('pcbgo'.includes(k)) trail.push([+i, `${x - 5},${k === 'c' ? b : t}`]);
  });
  [[5, 96], [114, 132]].forEach(([a, b]) => add(svg, 'polyline', {
    points: trail.filter(p => p[0] >= a && p[0] <= b).map(p => p[1]).join(' '),
    fill: 'none', stroke: '#a8bca0', 'stroke-width': 2.5, 'stroke-dasharray': '3 6' }));
  [80, 145, 207, 271, 331, 397, 457, 522, 583].forEach((y, k) =>
    add(svg, 'text', { class: 'axis-label', x: 2675, y: y + 8 }, k ? (100 - 10 * k).toFixed(2) : '100.0'));
  hline(svg, 720, 2682, '#8c1014');
  hline(svg, 748, 2682, '#5c0c0c');
  [[120, 6], [476, 7], [882, 8], [1256, 9], [1646, 10], [1932, 11], [2304, 12]].forEach(([x, m]) => {
    add(svg, 'path', { d: `M${x} 720V748`, stroke: '#8c1014', 'stroke-width': 2.5 });
    add(svg, 'text', { class: 'month', x: x + 4, y: 743 }, m);
  });
  add(svg, 'text', { class: 'unit', x: 2642, y: 743 }, '日线');
  add(svg, 'path', { d: 'M2602 30H2681V720', fill: 'none', stroke: '#9c1014', 'stroke-width': 4 });
  add(svg, 'path', { d: 'M2602 30V748', stroke: '#9c1014', 'stroke-width': 4 });
  add(svg, 'rect', { x: 1241, y: 8, width: 130, height: 158, fill: 'none', stroke: '#f0cc18', 'stroke-width': 5 });
}

/* ---- quote tables ---- */
function rows(id, list, toHtml) {
  document.getElementById(id).innerHTML = list.map(toHtml).join('');
}
const level = ([n, p, v]) => `<tr><th>${n}</th><td class="g">${p}</td><th></th><td class="y">${v}</td></tr>`;
rows('asks', [['卖五', '42.25', 108], ['卖四', '42.24', 54], ['卖三', '42.21', 32], ['卖二', '42.20', 188], ['卖一', '42.19', 91]], level);
rows('bids', [['买一', '42.18', 75], ['买二', '42.11', 3], ['买三', '42.10', 180], ['买四', '42.09', 7], ['买五', '42.08', 42]], level);
rows('trades', `14:55 42.22 68 B 5,14:55 42.23 20 B 2,14:55 42.22 5 B 2,14:55 42.23 35 B 4,14:56 42.23 17 B 1,14:56 42.15 103 S 17,14:56 42.20 11 S 2,14:56 42.20 40 B 2,14:56 42.20 20 B 11,14:56 42.20 178 B 10,14:56 42.20 23 B 2,14:56 42.12 170 S 16,14:56 42.12 22 S 6,14:56 42.19 1 B 1,14:56 42.22 150 B 8,14:56 42.20 1 S 1,14:56 42.19 9 S 5,14:56 42.10 158 S 17,14:56 42.10 4 B 2,14:56 42.10 15 B 4,14:56 42.10 105 B 11,14:57 42.08 16 B 3,15:00 42.19 2051  84`.split(','), s => {
  const [t, p, v, d, n] = s.split(' ');
  return `<tr><td>${t}</td><td class="g">${p}</td><td class="${d ? 'y' : 'v'}">${v}</td><td class="${d === 'B' ? 'r' : 'g'}">${d}</td><td>${n}</td></tr>`;
});
drawPrice();
drawFlow();
```
